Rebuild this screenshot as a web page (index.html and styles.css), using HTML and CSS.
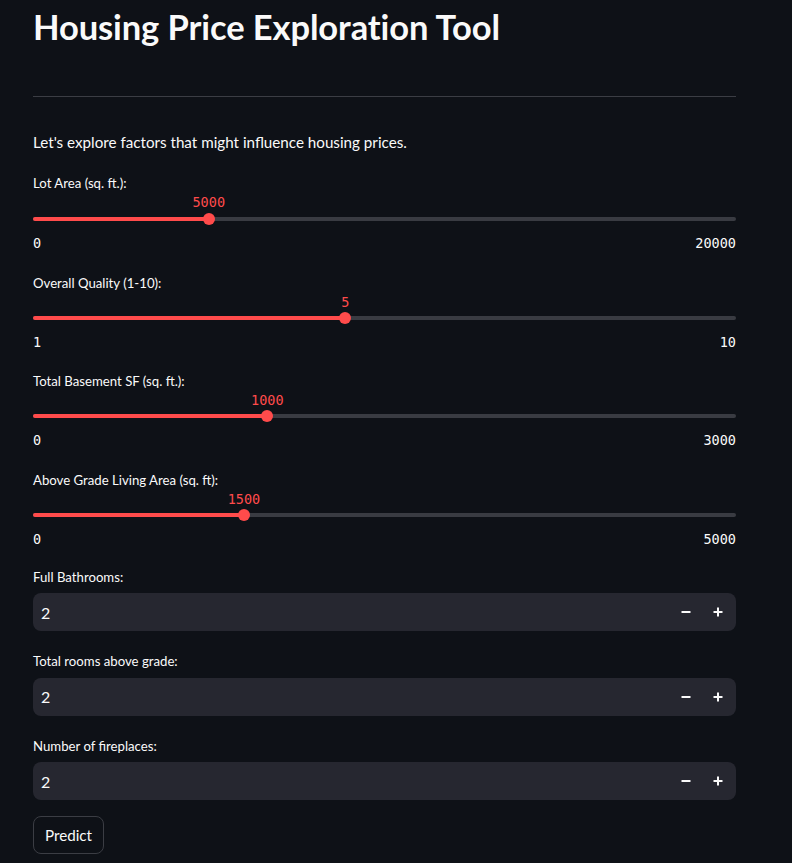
FILE: index.html
```html
<!DOCTYPE html>
<html lang="en">
<head>
<meta charset="utf-8">
<title>Housing Price Exploration Tool</title>
<link rel="stylesheet" href="styles.css">
</head>
<body>
<main class="container">
  <h1 class="title">Housing Price Exploration Tool</h1>
  <hr class="divider">
  <p class="intro">Let's explore factors that might influence housing prices.</p>

  <div class="slider first">
    <div class="label">Lot Area (sq. ft.):</div>
    <div class="value-row"><span class="value" style="left:25%">5000</span></div>
    <div class="track-row">
      <div class="track"><div class="fill" style="width:25%"></div><div class="thumb" style="left:25%"></div></div>
    </div>
    <div class="ticks"><span>0</span><span>20000</span></div>
  </div>

  <div class="slider">
    <div class="label">Overall Quality (1-10):</div>
    <div class="value-row"><span class="value" style="left:44.44%">5</span></div>
    <div class="track-row">
      <div class="track"><div class="fill" style="width:44.44%"></div><div class="thumb" style="left:44.44%"></div></div>
    </div>
    <div class="ticks"><span>1</span><span>10</span></div>
  </div>

  <div class="slider">
    <div class="label">Total Basement SF (sq. ft.):</div>
    <div class="value-row"><span class="value" style="left:33.33%">1000</span></div>
    <div class="track-row">
      <div class="track"><div class="fill" style="width:33.33%"></div><div class="thumb" style="left:33.33%"></div></div>
    </div>
    <div class="ticks"><span>0</span><span>3000</span></div>
  </div>

  <div class="slider">
    <div class="label">Above Grade Living Area (sq. ft):</div>
    <div class="value-row"><span class="value" style="left:30%">1500</span></div>
    <div class="track-row">
      <div class="track"><div class="fill" style="width:30%"></div><div class="thumb" style="left:30%"></div></div>
    </div>
    <div class="ticks"><span>0</span><span>5000</span></div>
  </div>

  <div class="number first">
    <div class="label">Full Bathrooms:</div>
    <div class="input-box">
      <span class="input-value">2</span>
      <span class="step minus"><svg width="12" height="12" viewBox="0 0 12 12"><rect x="1.5" y="5" width="9" height="2" fill="#fafafa"/></svg></span>
      <span class="step plus"><svg width="12" height="12" viewBox="0 0 12 12"><rect x="1.5" y="5" width="9" height="2" fill="#fafafa"/><rect x="5" y="1.5" width="2" height="9" fill="#fafafa"/></svg></span>
    </div>
  </div>

  <div class="number">
    <div class="label">Total rooms above grade:</div>
    <div class="input-box">
      <span class="input-value">2</span>
      <span class="step minus"><svg width="12" height="12" viewBox="0 0 12 12"><rect x="1.5" y="5" width="9" height="2" fill="#fafafa"/></svg></span>
      <span class="step plus"><svg width="12" height="12" viewBox="0 0 12 12"><rect x="1.5" y="5" width="9" height="2" fill="#fafafa"/><rect x="5" y="1.5" width="2" height="9" fill="#fafafa"/></svg></span>
    </div>
  </div>

  <div class="number">
    <div class="label">Number of fireplaces:</div>
    <div class="input-box">
      <span class="input-value">2</span>
      <span class="step minus"><svg width="12" height="12" viewBox="0 0 12 12"><rect x="1.5" y="5" width="9" height="2" fill="#fafafa"/></svg></span>
      <span class="step plus"><svg width="12" height="12" viewBox="0 0 12 12"><rect x="1.5" y="5" width="9" height="2" fill="#fafafa"/><rect x="5" y="1.5" width="2" height="9" fill="#fafafa"/></svg></span>
    </div>
  </div>

  <button class="btn">Predict</button>
</main>
</body>
</html>
```
FILE: styles.css
```css
html, body {
  margin: 0;
  padding: 0;
  background: #0e1117;
  color: #fafafa;
  font-family: Lato, "Noto Sans", sans-serif;
}
.container {
  width: 703px;
  margin-left: 33px;
  display: flex;
  flex-direction: column;
}
.title {
  margin: 0;
  padding-top: 4px;
  font-size: 34.5px;
  line-height: 46px;
  font-weight: 700;
  letter-spacing: -0.1px;
}
.divider {
  border: none;
  border-top: 1px solid #3b3d44;
  margin: 46px 0 0 0;
  height: 0;
}
.intro {
  margin: 34px 0 0 0;
  font-size: 15.2px;
  line-height: 22px;
}
.label {
  font-size: 13.2px;
  line-height: 20px;
  height: 20px;
}
.slider {
  margin-top: 21.67px;
}
.slider.first {
  margin-top: 20px;
}
.slider.first .value-row {
  height: 19px;
}
.value-row {
  position: relative;
  height: 18px;
}
.value {
  position: absolute;
  top: 0;
  transform: translateX(-50%);
  font-family: "DejaVu Sans Mono", "Liberation Mono", monospace;
  font-size: 13.5px;
  line-height: 18px;
  color: #ff4b4b;
}
.track-row {
  height: 14px;
  display: flex;
  align-items: center;
}
.track {
  position: relative;
  width: 100%;
  height: 4px;
  border-radius: 2px;
  background: #393b42;
}
.fill {
  height: 100%;
  border-radius: 2px;
  background: #ff4b4b;
}
.thumb {
  position: absolute;
  top: 50%;
  width: 12px;
  height: 12px;
  border-radius: 50%;
  background: #ff4b4b;
  transform: translate(-50%, -50%);
}
.ticks {
  margin-top: 9px;
  display: flex;
  justify-content: space-between;
  font-family: "DejaVu Sans Mono", "Liberation Mono", monospace;
  font-size: 13.5px;
  line-height: 16px;
}
.number {
  margin-top: 20px;
}
.number.first {
  margin-top: 20px;
}
.number .label {
  margin-bottom: 6.5px;
}
.input-box {
  height: 38px;
  border-radius: 8px;
  background: #262730;
  display: flex;
  align-items: center;
  padding-left: 8px;
  padding-right: 2px;
}
.input-value {
  flex: 1;
  font-size: 16px;
}
.step {
  width: 32px;
  height: 38px;
  display: flex;
  align-items: center;
  justify-content: center;
}
.btn {
  align-self: flex-start;
  margin-top: 16px;
  height: 38px;
  padding: 0 11px;
  background: #0e1117;
  color: #fafafa;
  border: 1px solid #3b3d44;
  border-radius: 8px;
  font-family: Lato, "Noto Sans", sans-serif;
  font-size: 15.2px;
}
```
